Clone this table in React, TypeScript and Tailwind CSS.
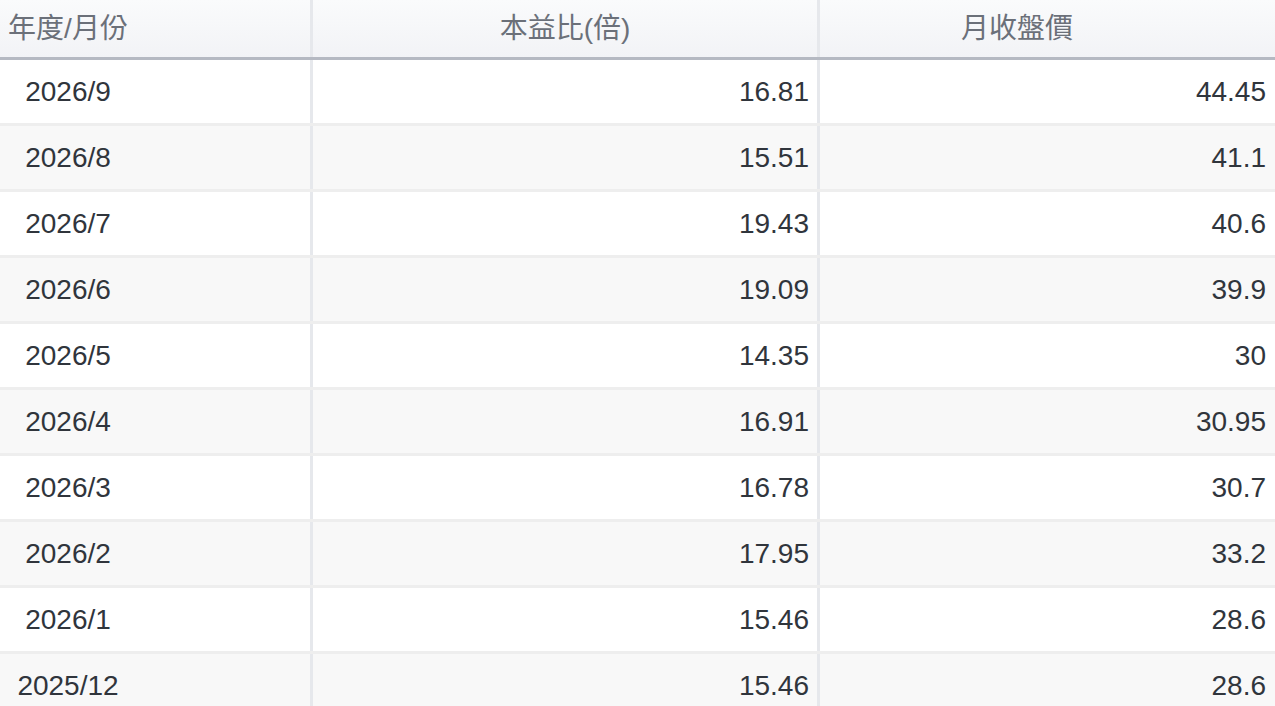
import React from "react";

const rows: [string, string, string][] = [
  ["2026/9", "16.81", "44.45"],
  ["2026/8", "15.51", "41.1"],
  ["2026/7", "19.43", "40.6"],
  ["2026/6", "19.09", "39.9"],
  ["2026/5", "14.35", "30"],
  ["2026/4", "16.91", "30.95"],
  ["2026/3", "16.78", "30.7"],
  ["2026/2", "17.95", "33.2"],
  ["2026/1", "15.46", "28.6"],
  ["2025/12", "15.46", "28.6"],
];

const cols = "grid grid-cols-[310px_3px_504px_3px_1fr]";

export default function App() {
  return (
    <main
      className="h-[706px] w-full overflow-hidden bg-white text-[28px]"
      style={{ fontFamily: '"Liberation Sans", "Noto Sans CJK TC", sans-serif' }}
    >
      <div className={`${cols} h-[57px] items-center bg-gradient-to-b from-[#fafbfc] to-[#f2f3f6] text-[#6b7079]`}>
        <div className="w-[136px] text-center">年度/月份</div>
        <div className="h-full bg-[#e6e8ec]" />
        <div className="text-center">本益比(倍)</div>
        <div className="h-full bg-[#e6e8ec]" />
        <div className="pr-[61px] text-center">月收盤價</div>
      </div>
      <div className="h-[3px] bg-[#b5b9c2]" />
      {rows.map(([month, pe, price], i) => (
        <div key={month}>
          <div
            className={`${cols} h-[63px] items-center text-[#30353c] ${
              i % 2 === 1 ? "bg-[#f8f8f8]" : "bg-white"
            }`}
          >
            <div className="w-[136px] text-center">{month}</div>
            <div className="h-full bg-[#e6e8ec]" />
            <div className="pr-[8px] text-right">{pe}</div>
            <div className="h-full bg-[#e6e8ec]" />
            <div className="pr-[9px] text-right">{price}</div>
          </div>
          <div className="h-[3px] bg-[#eeeeee]" />
        </div>
      ))}
    </main>
  );
}
